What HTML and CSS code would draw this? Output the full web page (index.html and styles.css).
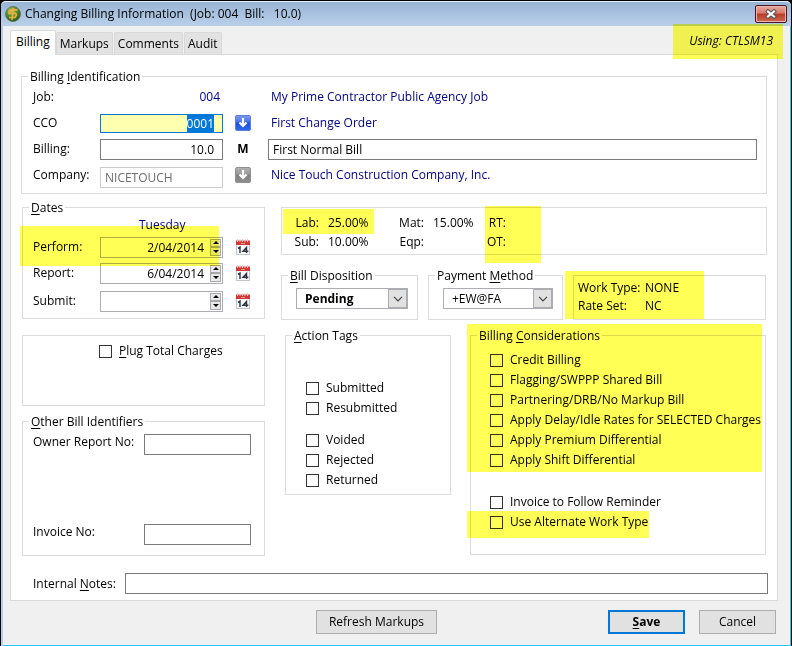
FILE: index.html
```html
<!DOCTYPE html>
<html lang="en">
<head>
<meta charset="utf-8">
<title>Changing Billing Information</title>
<link rel="stylesheet" href="styles.css">
</head>
<body>
<svg class="defs" aria-hidden="true">
  <defs>
    <linearGradient id="blue" x1="0" y1="0" x2="0" y2="1">
      <stop offset="0" stop-color="#7f9df0"/><stop offset=".4" stop-color="#4a74e8"/><stop offset=".5" stop-color="#1f4fdc"/><stop offset="1" stop-color="#2a68f0"/>
    </linearGradient>
    <linearGradient id="grey" x1="0" y1="0" x2="0" y2="1">
      <stop offset="0" stop-color="#b4b4b4"/><stop offset=".45" stop-color="#989898"/><stop offset=".5" stop-color="#808080"/><stop offset="1" stop-color="#8e8e8e"/>
    </linearGradient>
    <radialGradient id="ball" cx=".4" cy=".3" r=".75">
      <stop offset="0" stop-color="#b9c46a"/><stop offset=".5" stop-color="#4f8a34"/><stop offset="1" stop-color="#27501f"/>
    </radialGradient>
    <symbol id="arrow" viewBox="0 0 16 16">
      <path d="M8 3v8M4.500 7.500L8 11l3.500-3.500" fill="none" stroke="#fff" stroke-width="2.200"/>
    </symbol>
    <symbol id="calendar" viewBox="0 0 16 16">
      <rect x="1.500" y="2.500" width="13" height="13" fill="#f7f7f9" stroke="#c3c3cb"/>
      <rect x="1" y="1.500" width="14" height="4.500" fill="#cf3a35"/>
      <path d="M2.500 0v3M5 0v3M7.500 0v3M10 0v3M12.500 0v3" stroke="#e9c9c9"/>
      <path d="M6 4.500h4" stroke="#e99a96"/>
      <path d="M3 9.300L5 8V14M11.500 14V8.500L8 12.200H13.300" fill="none" stroke="#2d3540" stroke-width="1.400"/>
    </symbol>
    <symbol id="chevron" viewBox="0 0 10 6"><path d="M1 .8L5 4.800L9 .8" fill="none" stroke="#444" stroke-width="1.200"/></symbol>
  </defs>
</svg>
<div class="window">
  <header class="titlebar">
    <svg class="logo" viewBox="0 0 16 16" aria-hidden="true">
      <circle cx="8" cy="8" r="7.500" fill="url(#ball)" stroke="#5d6f4a" stroke-width=".8"/>
      <path d="M12.500 3.800H7.500L4.500 4.500 4 7.300h6.500l1 1.500-1.500 2.700H4M8.500 2l-1.500 12" fill="none" stroke="#e8b13c" stroke-width="1.700"/>
    </svg>
    <h1>Changing Billing Information&nbsp; (Job: 004&nbsp; Bill:&nbsp;&nbsp; 10.0)</h1>
    <button class="close" type="button" aria-label="Close">
      <svg viewBox="0 0 12 10" aria-hidden="true"><path d="M3 2.500l6 5M9 2.500l-6 5" stroke="#4b4f5c" stroke-width="4" stroke-linecap="square"/><path d="M3 2.500l6 5M9 2.500l-6 5" stroke="#fff" stroke-width="2.200" stroke-linecap="square"/></svg>
    </button>
  </header>
  <nav class="tabs">
    <button class="tab active" type="button">Billing</button>
    <button class="tab" type="button">Markups</button>
    <button class="tab" type="button">Comments</button>
    <button class="tab" type="button">Audit</button>
    <span class="using mark">Using: CTLSM13</span>
  </nav>
  <main class="page">
    <fieldset class="ident">
      <legend>Billing <u>I</u>dentification</legend>
      <div class="ident-grid">
        <span>Job:</span><span class="value num">004</span><span></span><span class="value">My Prime Contractor Public Agency Job</span>
        <label for="cco">CCO</label><input id="cco" class="num cco" value="0001">
        <button class="lookup" type="button" aria-label="Choose change order"><svg viewBox="0 0 16 16"><rect x=".5" y=".5" width="15" height="15" rx="1.500" fill="url(#blue)" stroke="#5f7fd0"/><use href="#arrow"/></svg></button>
        <span class="value">First Change Order</span>
        <label for="bill">Billing:</label><input id="bill" class="num" value="10.0"><b class="flag">M</b><input class="desc" aria-label="Billing description" value="First Normal Bill">
        <label for="company">Company:</label><input id="company" class="company" value="NICETOUCH" disabled>
        <button class="lookup" type="button" aria-label="Choose company"><svg viewBox="0 0 16 16"><rect x=".5" y=".5" width="15" height="15" rx="1.500" fill="url(#grey)" stroke="#909090"/><use href="#arrow"/></svg></button>
        <span class="value">Nice Touch Construction Company, Inc.</span>
      </div>
    </fieldset>

    <div class="columns">
      <div class="left">
        <fieldset class="dates">
          <legend><u>D</u>ates</legend>
          <div class="weekday value">Tuesday</div>
          <div class="date-row mark"><label for="perform">Perform:</label>
            <span class="date"><input id="perform" value="2/04/2014"><span class="spin"><button type="button" aria-label="Next day"></button><button type="button" aria-label="Previous day"></button></span></span>
            <button class="cal" type="button" aria-label="Pick perform date"><svg><use href="#calendar"/></svg></button></div>
          <div class="date-row"><label for="report">Report:</label>
            <span class="date"><input id="report" value="6/04/2014"><span class="spin"><button type="button" aria-label="Next day"></button><button type="button" aria-label="Previous day"></button></span></span>
            <button class="cal" type="button" aria-label="Pick report date"><svg><use href="#calendar"/></svg></button></div>
          <div class="date-row"><label for="submit">Submit:</label>
            <span class="date"><input id="submit" value=""><span class="spin"><button type="button" aria-label="Next day"></button><button type="button" aria-label="Previous day"></button></span></span>
            <button class="cal" type="button" aria-label="Pick submit date"><svg><use href="#calendar"/></svg></button></div>
        </fieldset>
        <fieldset class="plug">
          <label class="check"><input type="checkbox"><span><u>P</u>lug Total Charges</span></label>
        </fieldset>
        <fieldset class="other">
          <legend><u>O</u>ther Bill Identifiers</legend>
          <div class="other-rows">
            <div class="other-row"><label for="owner">Owner Report No:</label><input id="owner"></div>
            <div class="other-row"><label for="invoice">Invoice No:</label><input id="invoice"></div>
          </div>
        </fieldset>
      </div>

      <div class="right">
        <section class="rates">
          <div class="rate mark"><span>Lab:</span><span>25.00%</span><span>Sub:</span><span>10.00%</span></div>
          <div class="rate"><span>Mat:</span><span>15.00%</span><span>Eqp:</span><span></span></div>
          <div class="rate overtime mark"><span>RT:</span><span>OT:</span></div>
        </section>
        <div class="methods">
          <fieldset class="disposition">
            <legend><u>B</u>ill Disposition</legend>
            <div class="combo strong"><select aria-label="Bill Disposition"><option>Pending</option></select><span class="drop"><svg><use href="#chevron"/></svg></span></div>
          </fieldset>
          <fieldset class="payment">
            <legend>Payment <u>M</u>ethod</legend>
            <div class="combo"><select aria-label="Payment Method"><option>+EW@FA</option></select><span class="drop"><svg><use href="#chevron"/></svg></span></div>
          </fieldset>
          <section class="worktype mark">
            <span>Work Type:</span><span>NONE</span><span>Rate Set:</span><span>NC</span>
          </section>
        </div>
        <div class="options">
          <fieldset class="tags">
            <legend><u>A</u>ction Tags</legend>
            <label class="check"><input type="checkbox"><span>Submitted</span></label>
            <label class="check"><input type="checkbox"><span>Resubmitted</span></label>
            <label class="check spaced"><input type="checkbox"><span>Voided</span></label>
            <label class="check"><input type="checkbox"><span>Rejected</span></label>
            <label class="check"><input type="checkbox"><span>Returned</span></label>
          </fieldset>
          <fieldset class="consider">
            <legend>Billing <u>C</u>onsiderations</legend>
            <div class="group mark">
              <label class="check"><input type="checkbox"><span>Credit Billing</span></label>
              <label class="check"><input type="checkbox"><span>Flagging/SWPPP Shared Bill</span></label>
              <label class="check"><input type="checkbox"><span>Partnering/DRB/No Markup Bill</span></label>
              <label class="check"><input type="checkbox"><span>Apply Delay/Idle Rates for SELECTED Charges</span></label>
              <label class="check"><input type="checkbox"><span>Apply Premium Differential</span></label>
              <label class="check"><input type="checkbox"><span>Apply Shift Differential</span></label>
            </div>
            <label class="check"><input type="checkbox"><span>Invoice to Follow Reminder</span></label>
            <label class="check alternate mark"><input type="checkbox"><span>Use Alternate Work Type</span></label>
          </fieldset>
        </div>
      </div>
    </div>

    <div class="notes"><label for="notes">Internal <u>N</u>otes:</label><input id="notes"></div>
  </main>
  <footer class="actions">
    <button class="btn refresh" type="button">Refresh Markups</button>
    <button class="btn save" type="submit"><u>S</u>ave</button>
    <button class="btn" type="button">Cancel</button>
  </footer>
</div>
<script src="script.js"></script>
</body>
</html>
```
FILE: styles.css
```css
* { box-sizing: border-box; }
body { margin: 0; background: #000; }
body, button, input, select { font: 12px/16px "Open Sans", "Noto Sans", sans-serif; color: #000; }
button { padding: 0; }
.defs { position: absolute; width: 0; height: 0; }
u { text-decoration: underline; text-underline-offset: 2px; text-decoration-skip-ink: none; }

.window {
  display: flex; flex-direction: column; min-height: 100vh;
  border: 1px solid #000; border-radius: 6px 6px 0 0;
  background: #f0f0f0; box-shadow: inset 2px 0 #b8cfe8, inset -1px -1px #28c8f0;
}
.titlebar {
  display: flex; align-items: center; gap: 4px; height: 25px; padding: 0 4px 0 4px;
  border-top: 1px solid #e8f0fa; border-radius: 5px 5px 0 0;
  background: linear-gradient(#98b4d4, #b9d0ea);
}
.titlebar h1 { flex: 1; margin: 0; font-size: 12px; font-weight: 400; white-space: nowrap; }
.logo { width: 16px; height: 16px; }
.close {
  display: grid; place-items: center; width: 32px; height: 18px;
  border: 1px solid #4a1420; border-radius: 2px;
  background: linear-gradient(#e9a99e, #d9796b 45%, #b83a24 50%, #cf6a54);
  box-shadow: inset 0 0 0 1px #e8b8b0;
}
.close svg { width: 12px; height: 10px; }

.tabs { display: flex; align-items: flex-end; gap: 1px; height: 28px; margin: 0 13px 0 9px; }
.tab {
  height: 22px; padding: 0 3px; border: 1px solid #d9d9d9; border-bottom: 0; border-radius: 2px 2px 0 0;
  background: #e2e2e2;
}
.tab.active { height: 25px; padding: 0 5px 2px; margin: 0 -1px -1px 0; background: #fff; z-index: 1; }
.using { margin-left: auto; padding: 0 5px 5px; font-style: italic; }
.page { flex: 1; margin: 0 13px 0 9px; padding: 14px 9px 6px 10px; border: 1px solid #d9d9d9; background: #fff; }

.mark { position: relative; }
.mark::after { content: ""; position: absolute; background: #ffff55; mix-blend-mode: multiply; pointer-events: none; }
.using::after { inset: -9px -5px -5px -11px; }

fieldset { min-width: 0; margin: 0; padding: 0; border: 1px solid #dcdcdc; }
legend { height: 15px; line-height: 15px; margin-left: 6px; padding: 0 2px; }
input { width: 100%; height: 21px; padding: 0 4px; border: 1px solid #7a7a7a; border-radius: 0; background: #fff; outline: 0; }
.num { text-align: right; }
.value { color: #000080; }

.ident { margin-right: 1px; }
.ident-grid {
  display: grid; grid-template-columns: 67px 123px 40px 1fr; grid-auto-rows: 26px;
  align-items: center; padding: 0 9px 5px 11px;
}
.ident-grid span.num { padding-right: 3px; }
.ident-grid span.value:not(.num) { margin-left: 8px; }
.ident-grid .desc { margin-left: 5px; width: calc(100% - 5px); }
.ident-grid input.num { padding-right: 8px; }
.ident-grid .cco { height: 19px; border-color: #0078d7; background: #ffffb0; }
.cco::selection { background: #0078d7; color: #fff; }
.ident-grid .company { align-self: end; border-color: #ccc; color: #6d6d6d; }
.lookup, .cal { justify-self: center; width: 16px; height: 16px; border: 0; background: none; }
.lookup svg, .cal svg { display: block; width: 16px; height: 16px; }
.flag { text-align: center; }

.columns { display: grid; grid-template-columns: 243px 1fr; gap: 16px; padding: 6px 2px 0 1px; }
.left { display: flex; flex-direction: column; }
.weekday { height: 19px; padding-left: 116px; line-height: 19px; }
.date-row { display: grid; grid-template-columns: 67px 123px 40px; align-items: center; height: 26px; margin-left: 10px; }
.date-row:last-child { margin: 2px 0 4px 10px; }
.date-row.mark::after { inset: -8px 45px -6px -13px; }
.date { display: flex; height: 21px; border: 1px solid #abadb3; outline: 0; }
.date input { flex: 1; min-width: 0; height: 19px; padding-right: 6px; border: 0; text-align: right; }
.spin { display: flex; flex-direction: column; width: 12px; padding: 1px 1px 1px 0; }
.spin button { display: grid; place-items: center; flex: 1; border: 1px solid #a8a8a8; background: #e8e8e8; }
.spin button::before { content: ""; border: 3px solid transparent; border-top-width: 0; border-bottom: 3px solid #000; }
.spin button + button::before { transform: rotate(180deg); }
.plug { height: 71px; margin-top: 16px; padding: 5px 76px; }
.other { flex: 1; margin-top: 8px; }
.other-rows { display: flex; flex-direction: column; gap: 69px; padding: 5px 13px 10px 10px; }
.other-row { display: grid; grid-template-columns: 111px 1fr; }

.right { display: flex; flex-direction: column; min-width: 0; }
.rates { display: flex; height: 48px; margin: 7px -1px 0 0; padding: 5px 0 0 14px; border: 1px solid #dcdcdc; }
.rate { display: grid; grid-template-columns: 23px 73px; column-gap: 9px; grid-auto-rows: 19px; line-height: 19px; }
.rate span:nth-child(odd), .overtime span { justify-self: end; }
.rate.overtime { grid-template-columns: 18px; margin-left: -18px; }
.rate:first-child::after { inset: -4px 27px 20px -13px; }
.overtime.mark::after { inset: -7px -35px -9px -3px; }
.methods { display: flex; align-items: flex-end; gap: 10px; margin-top: 13px; }
.methods fieldset { height: 52px; padding: 6px 9px 0 14px; }
.disposition { width: 137px; }
.payment { width: 135px; }
.methods legend { margin-left: -8px; }
.combo { display: flex; height: 21px; margin-top: -1px; border: 1px solid #abadb3; position: relative; }
.combo select { width: 100%; padding: 0 8px; border: 0; appearance: none; background: #fff; outline: 0; }
.combo.strong select { font-weight: 700; }
.drop { position: absolute; top: 0; right: 0; display: grid; place-items: center; width: 19px; height: 19px; border: 1px solid #abadb3; background: #e1e1e1; pointer-events: none; }
.drop svg { width: 10px; height: 6px; }
.worktype { flex: 1; display: grid; grid-template-columns: 67px 1fr; grid-auto-rows: 18px; align-content: center; height: 45px; padding-left: 4px; border: 1px solid #dcdcdc; }
.worktype.mark::after { inset: -5px 61px 0 -9px; }

.options { flex: 1; display: flex; align-items: flex-start; gap: 19px; margin-top: 8px; padding-left: 4px; }
.check { display: flex; align-items: center; gap: 7px; height: 20px; white-space: nowrap; }
.check input { appearance: none; width: 13px; height: 13px; margin: 0; padding: 0; border: 1px solid #333; flex: none; }
.check input:checked { background: #333; }
.tags { width: 166px; padding: 35px 0 4px 20px; }
.tags legend { margin-left: -14px; }
.spaced { margin-top: 12px; }
.consider { flex: 1; padding: 7px 0 22px 19px; }
.consider legend { margin-left: -13px; }
.group { margin-bottom: 22px; }
.group.mark::after { inset: -26px 3px -2px -23px; }
.alternate.mark::after { inset: -1px 116px -6px -23px; }

.notes { display: grid; grid-template-columns: 92px 1fr; align-items: center; margin: 17px 0 0 12px; }
.actions { display: flex; justify-content: flex-end; gap: 14px; padding: 9px 15px 11px; }
.actions { padding-bottom: 12px; }
.btn { width: 77px; height: 24px; border: 1px solid #adadad; background: #e1e1e1; }
.btn.refresh { width: 121px; margin-right: 157px; }
.btn.save { border: 2px solid #0078d7; font-weight: 700; }
```
FILE: script.js
```js
const cco = document.getElementById("cco");
cco.focus();
cco.select();
```
